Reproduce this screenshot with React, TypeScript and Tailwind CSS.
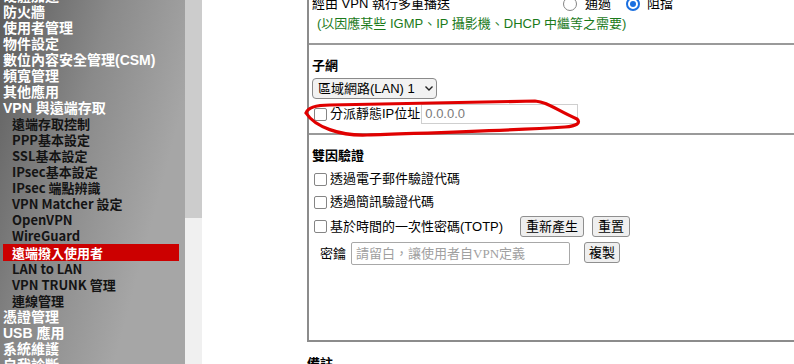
import React from "react";

const sansMain = '"Liberation Sans", "Noto Sans CJK TC", sans-serif';
const sansCjk = '"Noto Sans CJK TC", "Liberation Sans", sans-serif';

type Item = { label: string; sub?: boolean; active?: boolean };

const menu: Item[] = [
  { label: "硬體加速" },
  { label: "防火牆" },
  { label: "使用者管理" },
  { label: "物件設定" },
  { label: "數位內容安全管理(CSM)" },
  { label: "頻寬管理" },
  { label: "其他應用" },
  { label: "VPN 與遠端存取" },
  { label: "遠端存取控制", sub: true },
  { label: "PPP基本設定", sub: true },
  { label: "SSL基本設定", sub: true },
  { label: "IPsec基本設定", sub: true },
  { label: "IPsec 端點辨識", sub: true },
  { label: "VPN Matcher 設定", sub: true },
  { label: "OpenVPN", sub: true },
  { label: "WireGuard", sub: true },
  { label: "遠端撥入使用者", sub: true, active: true },
  { label: "LAN to LAN", sub: true },
  { label: "VPN TRUNK 管理", sub: true },
  { label: "連線管理", sub: true },
  { label: "憑證管理" },
  { label: "USB 應用" },
  { label: "系統維護" },
  { label: "自我診斷" },
];

function Checkbox() {
  return (
    <span className="ml-[5px] mr-[3px] inline-block h-[13px] w-[13px] shrink-0 rounded-[2px] border border-[#858585] bg-white" />
  );
}

function Btn({ children, w }: { children: React.ReactNode; w: string }) {
  return (
    <span
      className={`flex h-[21px] ${w} items-center justify-center rounded-[3px] border border-[#8f8f8f] bg-[#efefef] text-[13px] leading-none text-black`}
    >
      {children}
    </span>
  );
}

export default function App() {
  return (
    <div
      className="relative flex h-[364px] w-[794px] overflow-hidden bg-white"
      style={{ fontFamily: sansMain }}
    >
      {/* Sidebar */}
      <aside className="h-full w-[185px] shrink-0 bg-[linear-gradient(105deg,#5c5c5c_0%,#8a8a8a_40%,#a6a6a6_75%,#a6a6a6_100%)]">
        <div className="mt-[-12px] flex flex-col">
          {menu.map((m) =>
            m.active ? (
              <div
                key={m.label}
                className="ml-[3px] flex h-[17px] w-[176px] items-center bg-[#cc0000] pl-[9px] text-[13px] font-bold leading-[16px] text-white"
                style={{ fontFamily: sansCjk }}
              >
                {m.label}
              </div>
            ) : m.sub ? (
              <div
                key={m.label}
                className="flex h-[16px] items-center whitespace-nowrap pl-[12px] text-[13px] font-bold leading-[16px] text-[#141414]"
                style={{ fontFamily: sansCjk }}
              >
                {m.label}
              </div>
            ) : (
              <div
                key={m.label}
                className="flex h-[16px] items-center whitespace-nowrap pl-[3px] text-[14px] font-bold leading-[16px] text-white"
              >
                {m.label}
              </div>
            )
          )}
        </div>
      </aside>

      {/* Strip */}
      <div className="flex h-full w-[17px] shrink-0 flex-col">
        <div className="h-[218px] bg-[#cccccc]" />
        <div className="flex-1 bg-[#f0f0f0]" />
      </div>

      {/* Main */}
      <main className="flex-1">
        <div className="ml-[105px] mt-[-6px] flex h-[348px] flex-col border-b-2 border-l-2 border-[#8c8c8c] text-[13px] text-black">
          {/* row 1 */}
          <div className="flex h-[20px] items-center pl-[3px]">
            <span className="w-[251px] shrink-0 whitespace-nowrap">經由 VPN 執行多重播送</span>
            <span className="inline-block h-[14px] w-[14px] rounded-full border border-[#858585] bg-white" />
            <span className="ml-[8px]">通過</span>
            <span className="ml-[15px] flex h-[14px] w-[14px] items-center justify-center rounded-full border-2 border-[#1a6fe0] bg-white">
              <span className="h-[6px] w-[6px] rounded-full bg-[#1a6fe0]" />
            </span>
            <span className="ml-[7px]">阻擋</span>
          </div>
          {/* row 2 */}
          <div className="flex h-[20px] items-center whitespace-nowrap pl-[8px] text-[#1b7a1b]">
            (以因應某些 IGMP、IP 攝影機、DHCP 中繼等之需要)
          </div>
          <div className="mt-[9px] h-[2px] bg-[#9a9a9a]" />
          <div className="mt-[11px] flex h-[20px] items-center pl-[3px] font-bold">子網</div>
          <div className="mt-[2px] pl-[3px]">
            <div className="flex h-[21px] w-[125px] items-center rounded-[4px] border border-[#8a8a8a] bg-[#f2f2f2] pl-[5px]">
              <span className="whitespace-nowrap">區域網路(LAN) 1</span>
              <svg className="ml-[9px]" width="10" height="7" viewBox="0 0 10 7">
                <path d="M1.5 1.5 L5 5 L8.5 1.5" fill="none" stroke="#222" strokeWidth="1.4" />
              </svg>
            </div>
          </div>
          <div className="mt-[5px] flex h-[20px] items-center">
            <Checkbox />
            <span className="whitespace-nowrap">分派靜態IP位址</span>
            <span className="ml-[1px] flex h-[20px] w-[157px] items-center border border-[#cfcfcf] pl-[3px] text-[#7a7a7a]">
              0.0.0.0
            </span>
          </div>
          <div className="mt-[9px] h-[2px] bg-[#9a9a9a]" />
          <div className="mt-[11px] flex h-[20px] items-center pl-[3px] font-bold">雙因驗證</div>
          <div className="mt-[3px] flex h-[20px] items-center">
            <Checkbox />
            <span>透過電子郵件驗證代碼</span>
          </div>
          <div className="mt-[3px] flex h-[20px] items-center">
            <Checkbox />
            <span>透過簡訊驗證代碼</span>
          </div>
          <div className="mt-[4px] flex h-[21px] items-center">
            <Checkbox />
            <span className="whitespace-nowrap">基於時間的一次性密碼(TOTP)</span>
            <span className="ml-[17px]">
              <Btn w="w-[64px]">重新產生</Btn>
            </span>
            <span className="ml-[8px]">
              <Btn w="w-[38px]">重置</Btn>
            </span>
          </div>
          <div className="mt-[5px] flex h-[23px] items-center">
            <span className="ml-[11px]">密鑰</span>
            <span
              className="ml-[5px] flex h-[23px] w-[219px] items-center rounded-[2px] border border-[#a8a8a8] pl-[4px] text-[13px] text-[#a0a0a0]"
              style={{ fontFamily: '"Liberation Serif", "Noto Sans CJK TC", serif' }}
            >
              請留白，讓使用者自VPN定義
            </span>
            <span className="ml-[14px] mt-[-2px]">
              <Btn w="w-[36px]">複製</Btn>
            </span>
          </div>
        </div>
        <div className="ml-[105px] mt-[12px] flex h-[20px] items-center text-[13px] font-bold">備註</div>
      </main>

      {/* red hand-drawn annotation */}
      <svg
        className="pointer-events-none absolute left-0 top-0"
        width="794"
        height="364"
        viewBox="0 0 794 364"
      >
        <path
          d="M306 113 C308 107, 316 105, 330 105 L535 101 C548 102, 556 110, 577 119 C581 123, 577 126, 565 127 C500 131, 420 133, 367 135 C340 136, 315 127, 306 113"
          fill="none"
          stroke="#e00000"
          strokeWidth="3.2"
          strokeLinecap="round"
        />
      </svg>
    </div>
  );
}
